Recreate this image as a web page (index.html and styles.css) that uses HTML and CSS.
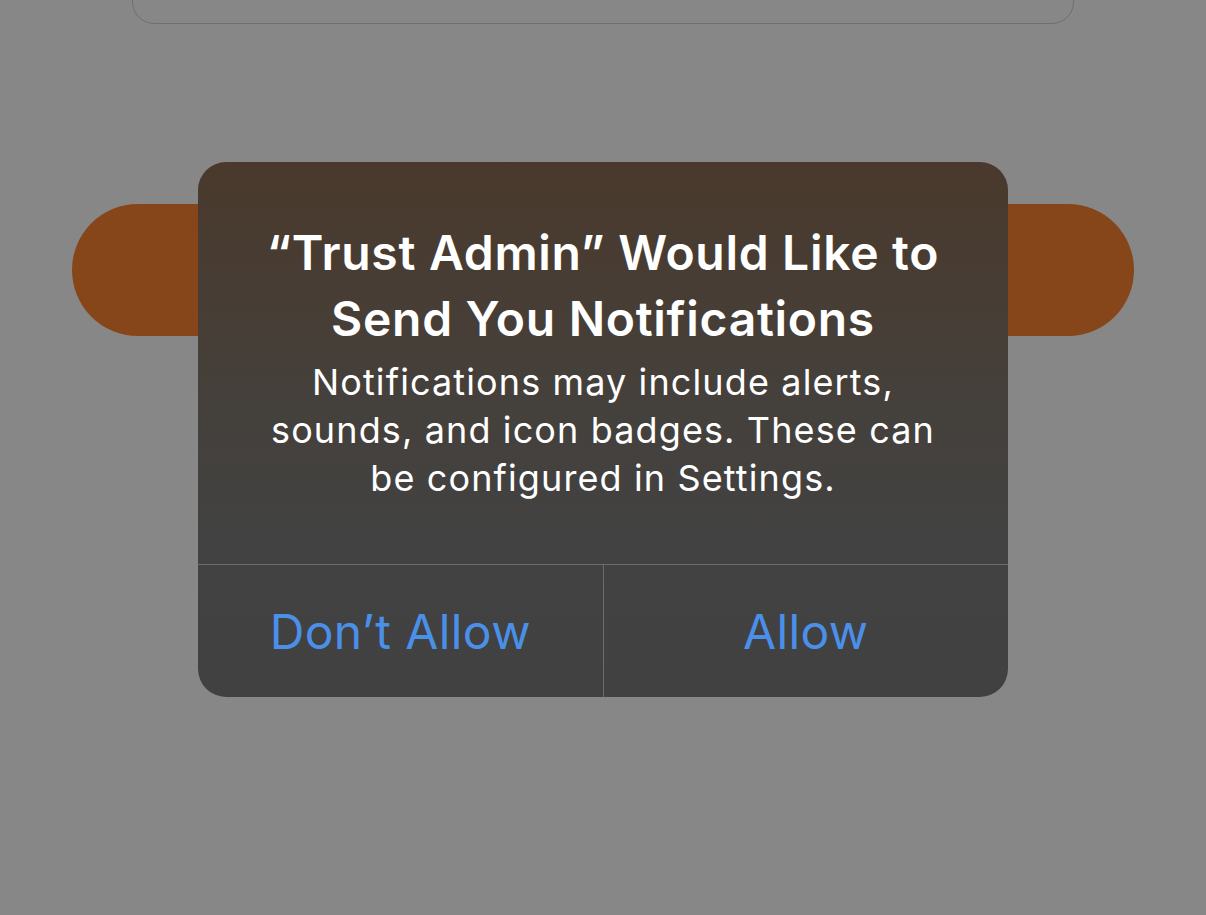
FILE: index.html
```html
<!DOCTYPE html>
<html>
<head>
<meta charset="utf-8">
<link rel="stylesheet" href="styles.css">
</head>
<body>
<div class="screen">
  <div class="card"></div>
  <div class="pill"></div>
  <div class="alert">
    <div class="alert-body">
      <h1 class="alert-title">“Trust Admin” Would Like to Send You Notifications</h1>
      <p class="alert-msg">Notifications may include alerts, sounds, and icon badges. These can be configured in Settings.</p>
    </div>
    <div class="alert-actions">
      <button class="alert-btn">Don’t Allow</button>
      <button class="alert-btn">Allow</button>
    </div>
  </div>
</div>
</body>
</html>
```
FILE: styles.css
```css
html, body {
  margin: 0;
  padding: 0;
  background: #878787;
  overflow: hidden;
}
.screen {
  position: relative;
  width: 1206px;
  height: 915px;
  background: #878787;
  font-family: Inter, "Noto Sans", sans-serif;
}
.card {
  position: absolute;
  left: 132px;
  top: -39px;
  width: 942px;
  height: 63px;
  border: 1px solid #6f6f6f;
  border-radius: 22px;
  box-sizing: border-box;
}
.pill {
  position: absolute;
  left: 72px;
  top: 204px;
  width: 1062px;
  height: 132px;
  border-radius: 66px;
  background: #87451a;
}
.alert {
  position: absolute;
  left: 198px;
  top: 162px;
  width: 810px;
  height: 535px;
  border-radius: 28px;
  overflow: hidden;
  display: flex;
  flex-direction: column;
  background: linear-gradient(180deg, #4a392c 0px, #45403b 230px, #424242 380px, #414141 100%);
}
.alert-body {
  flex: 1;
  padding: 58px 56px 0;
  text-align: center;
  color: #ffffff;
  border-bottom: 1px solid #6c6c6c;
}
.alert-title {
  margin: 0;
  font-size: 48px;
  line-height: 66px;
  font-weight: 600;
  letter-spacing: 0.7px;
}
.alert-msg {
  margin: 6px 0 0;
  font-size: 36px;
  line-height: 48px;
  font-weight: 400;
  letter-spacing: 1.12px;
}
.alert-actions {
  height: 132px;
  display: flex;
}
.alert-btn {
  flex: 1;
  border: 0;
  background: transparent;
  color: #4a90e9;
  font-family: inherit;
  font-size: 48px;
  font-weight: 400;
  letter-spacing: 0.4px;
  padding: 0;
}
.alert-btn + .alert-btn {
  border-left: 1px solid #6c6c6c;
}
```
